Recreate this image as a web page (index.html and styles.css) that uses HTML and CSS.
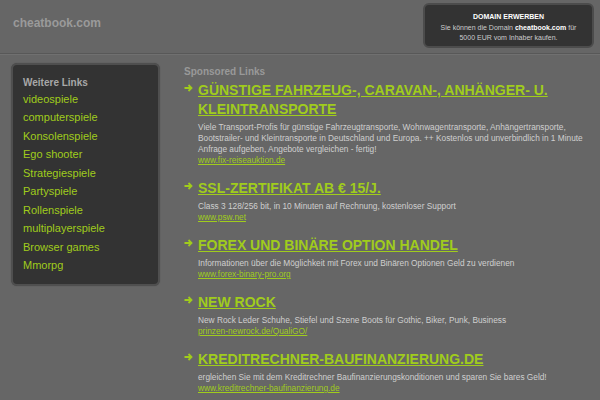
FILE: index.html
```html
<!DOCTYPE html>
<html lang="de">
<head>
<meta charset="utf-8">
<title>cheatbook.com</title>
<link rel="stylesheet" href="styles.css">
</head>
<body>
<header class="header">
  <div class="site-title">cheatbook.com</div>
  <div class="domain-box">
    <div class="domain-head">DOMAIN ERWERBEN</div>
    <div class="domain-text">Sie können die Domain <b>cheatbook.com</b> für<br>5000 EUR vom Inhaber kaufen.</div>
  </div>
</header>
<main class="main">
  <aside class="sidebar">
    <div class="side-head">Weitere Links</div>
    <ul class="side-list">
      <li><a href="#">videospiele</a></li>
      <li><a href="#">computerspiele</a></li>
      <li><a href="#">Konsolenspiele</a></li>
      <li><a href="#">Ego shooter</a></li>
      <li><a href="#">Strategiespiele</a></li>
      <li><a href="#">Partyspiele</a></li>
      <li><a href="#">Rollenspiele</a></li>
      <li><a href="#">multiplayerspiele</a></li>
      <li><a href="#">Browser games</a></li>
      <li><a href="#">Mmorpg</a></li>
    </ul>
  </aside>
  <section class="ads">
    <div class="ads-head">Sponsored Links</div>
    <div class="ad">
      <div class="ad-title"><svg class="arrow" viewBox="0 0 9 8" width="9" height="8"><path d="M0.5 4H7.5M4.5 1L7.5 4L4.5 7" fill="none" stroke="#a0cc1c" stroke-width="1.8"/></svg><a href="#">GÜNSTIGE FAHRZEUG-, CARAVAN-, ANHÄNGER- U. KLEINTRANSPORTE</a></div>
      <div class="ad-desc">Viele Transport-Profis für günstige Fahrzeugtransporte, Wohnwagentransporte, Anhängertransporte, Bootstrailer- und Kleintransporte in Deutschland und Europa. ++ Kostenlos und unverbindlich in 1 Minute Anfrage aufgeben, Angebote vergleichen - fertig!</div>
      <a class="ad-url" href="#">www.fix-reiseauktion.de</a>
    </div>
    <div class="ad">
      <div class="ad-title"><svg class="arrow" viewBox="0 0 9 8" width="9" height="8"><path d="M0.5 4H7.5M4.5 1L7.5 4L4.5 7" fill="none" stroke="#a0cc1c" stroke-width="1.8"/></svg><a href="#">SSL-ZERTIFIKAT AB € 15/J.</a></div>
      <div class="ad-desc">Class 3 128/256 bit, in 10 Minuten auf Rechnung, kostenloser Support</div>
      <a class="ad-url" href="#">www.psw.net</a>
    </div>
    <div class="ad">
      <div class="ad-title"><svg class="arrow" viewBox="0 0 9 8" width="9" height="8"><path d="M0.5 4H7.5M4.5 1L7.5 4L4.5 7" fill="none" stroke="#a0cc1c" stroke-width="1.8"/></svg><a href="#">FOREX UND BINÄRE OPTION HANDEL</a></div>
      <div class="ad-desc">Informationen über die Möglichkeit mit Forex und Binären Optionen Geld zu verdienen</div>
      <a class="ad-url" href="#">www.forex-binary-pro.org</a>
    </div>
    <div class="ad">
      <div class="ad-title"><svg class="arrow" viewBox="0 0 9 8" width="9" height="8"><path d="M0.5 4H7.5M4.5 1L7.5 4L4.5 7" fill="none" stroke="#a0cc1c" stroke-width="1.8"/></svg><a href="#">NEW ROCK</a></div>
      <div class="ad-desc">New Rock Leder Schuhe, Stiefel und Szene Boots für Gothic, Biker, Punk, Business</div>
      <a class="ad-url" href="#">prinzen-newrock.de/QualiGO/</a>
    </div>
    <div class="ad">
      <div class="ad-title"><svg class="arrow" viewBox="0 0 9 8" width="9" height="8"><path d="M0.5 4H7.5M4.5 1L7.5 4L4.5 7" fill="none" stroke="#a0cc1c" stroke-width="1.8"/></svg><a href="#">KREDITRECHNER-BAUFINANZIERUNG.DE</a></div>
      <div class="ad-desc">ergleichen Sie mit dem Kreditrechner Baufinanzierungskonditionen und sparen Sie bares Geld!</div>
      <a class="ad-url" href="#">www.kreditrechner-baufinanzierung.de</a>
    </div>
  </section>
</main>
</body>
</html>
```
FILE: styles.css
```css
html, body {
  margin: 0;
  padding: 0;
  background: #666666;
  font-family: "Liberation Sans", Arial, sans-serif;
  overflow: hidden;
}
a { color: #a0cc1c; }

.header {
  height: 53px;
  display: flex;
  justify-content: space-between;
  align-items: flex-start;
  border-bottom: 1px solid #585858;
  box-shadow: 0 1px 0 #707070;
}
.site-title {
  margin: 16px 0 0 13px;
  font-size: 12px;
  font-weight: bold;
  color: #9a9a9a;
  line-height: 14px;
}
.domain-box {
  margin: 3px 6px 0 0;
  width: 167px;
  height: 41px;
  background: #333333;
  border: 2px solid #4c4c4c;
  border-radius: 6px;
  text-align: center;
}
.domain-head {
  margin-top: 7px;
  font-size: 7px;
  line-height: 10px;
  font-weight: bold;
  color: #ffffff;
}
.domain-text {
  margin-top: 1px;
  font-size: 7px;
  line-height: 10px;
  color: #cccccc;
}
.domain-text b { color: #ffffff; }

.main {
  display: flex;
  align-items: flex-start;
  padding-top: 9px;
}
.sidebar {
  margin-left: 11px;
  width: 135px;
  padding: 11px 0 9px 10px;
  background: #333333;
  border: 2px solid #4f4f4f;
  border-radius: 6px;
  box-shadow: 0 0 1px #444;
}
.side-head {
  font-size: 10px;
  line-height: 14px;
  font-weight: bold;
  color: #a8a8a8;
}
.side-list {
  list-style: none;
  margin: 0;
  padding: 0;
}
.side-list li {
  font-size: 11px;
  line-height: 18.45px;
}
.side-list a {
  text-decoration: none;
  color: #a0cc1c;
}

.ads {
  margin-left: 24px;
  padding-top: 3px;
  width: 405px;
}
.ads-head {
  font-size: 10px;
  line-height: 12px;
  font-weight: bold;
  color: #999999;
  margin-bottom: 3px;
}
.ad { margin-bottom: 13px; }
.ad-title {
  position: relative;
  padding-left: 14px;
  font-size: 14px;
  line-height: 19px;
  font-weight: bold;
}
.ad-title a { color: #a0cc1c; }
.arrow {
  position: absolute;
  left: 0;
  top: 3px;
}
.ad-desc {
  margin-top: 3px;
  padding-left: 14px;
  font-size: 8.3px;
  line-height: 11px;
  color: #cfcfcf;
}
.ad-url {
  display: block;
  margin-left: 14px;
  font-size: 8.3px;
  line-height: 11px;
}
```
